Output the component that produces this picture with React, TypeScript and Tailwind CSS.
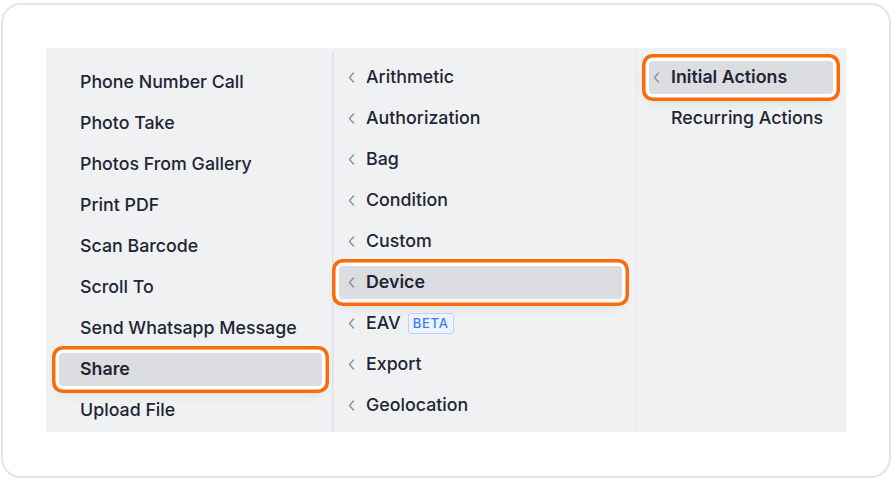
import React from 'react';

type Item = { label: string; chevron?: boolean; active?: boolean; badge?: string };

const leftItems: Item[] = [
  { label: 'Phone Number Call' },
  { label: 'Photo Take' },
  { label: 'Photos From Gallery' },
  { label: 'Print PDF' },
  { label: 'Scan Barcode' },
  { label: 'Scroll To' },
  { label: 'Send Whatsapp Message' },
  { label: 'Share', active: true },
  { label: 'Upload File' },
];

const middleItems: Item[] = [
  { label: 'Arithmetic', chevron: true },
  { label: 'Authorization', chevron: true },
  { label: 'Bag', chevron: true },
  { label: 'Condition', chevron: true },
  { label: 'Custom', chevron: true },
  { label: 'Device', chevron: true, active: true },
  { label: 'EAV', chevron: true, badge: 'BETA' },
  { label: 'Export', chevron: true },
  { label: 'Geolocation', chevron: true },
];

function Chevron() {
  return (
    <svg width="7" height="11" viewBox="0 0 7 11" fill="none" className="shrink-0">
      <path d="M5.5 1 L1.5 5.5 L5.5 10" stroke="#8d9099" strokeWidth="1.4" strokeLinecap="round" strokeLinejoin="round" />
    </svg>
  );
}

function Row({ item, pad }: { item: Item; pad: string }) {
  return (
    <div
      className={`flex h-[33px] items-center rounded-[4px] ${pad} ${
        item.active
          ? 'bg-[#dcdde1] font-semibold shadow-[0_6px_14px_rgba(0,0,0,0.12)] ring-[3.5px] ring-[#fa6b0c] ring-offset-[3.5px] ring-offset-white'
          : 'font-medium'
      }`}
    >
      {item.chevron && <Chevron />}
      <span className={item.chevron ? 'ml-[11px]' : ''}>{item.label}</span>
      {item.badge && (
        <span className="ml-[7px] flex h-[21px] items-center rounded-[3px] border border-[#bcd0fa] bg-[#eef4ff] px-[4px] text-[13px] font-medium tracking-[0.06em] text-[#3d7cf2]">
          {item.badge}
        </span>
      )}
    </div>
  );
}

export default function App() {
  return (
    <div className="h-[481px] w-[892px] bg-white px-[1px] pt-[3px] font-['Inter',sans-serif] text-[17.8px] text-[#1f2535]">
      <div className="flex h-[475px] rounded-[20px] border-2 border-[#e3e5e8] pl-[43px] pt-[43px]">
        <div className="flex h-[384px] w-[800px] bg-[#f0f1f3] pt-[4px]">
          {/* actions */}
          <div className="flex w-[287px] flex-col gap-[8px] border-r border-[#e0e2e6] pl-[13px] pr-[10px] pt-[14px]">
            {leftItems.map((item) => (
              <Row key={item.label} item={item} pad="pl-[21px]" />
            ))}
          </div>
          {/* categories */}
          <div className="flex w-[304px] flex-col gap-[8px] border-l border-r border-[#e6e7ea] pl-[5px] pr-[14px] pt-[9px]">
            {middleItems.map((item) => (
              <Row key={item.label} item={item} pad="pl-[9px]" />
            ))}
          </div>
          {/* groups */}
          <div className="flex flex-1 flex-col gap-[8px] pl-[12px] pr-[13px] pt-[9px]">
            <Row item={{ label: 'Initial Actions', chevron: true, active: true }} pad="pl-[4px]" />
            <Row item={{ label: 'Recurring Actions' }} pad="pl-[22px]" />
          </div>
        </div>
      </div>
    </div>
  );
}
